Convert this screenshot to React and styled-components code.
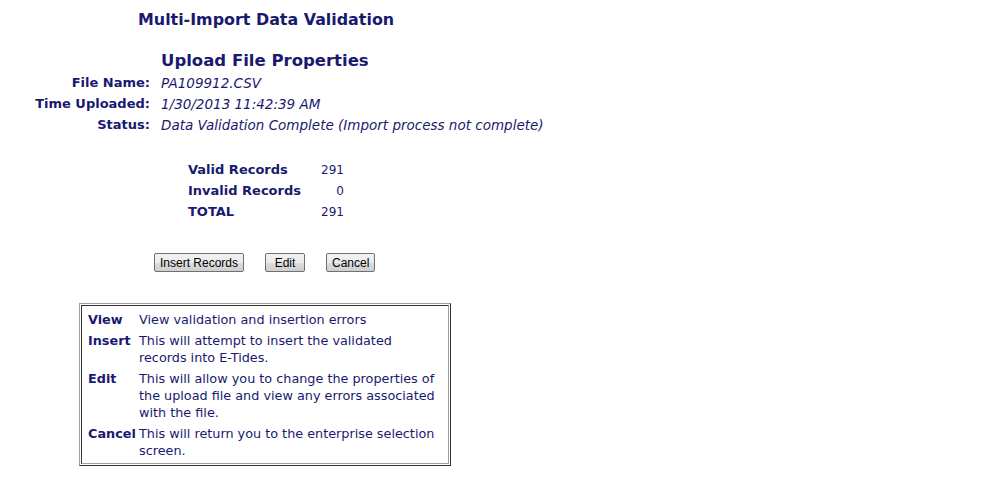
import React from "react";
import styled, { createGlobalStyle } from "styled-components";

const GlobalStyle = createGlobalStyle`
  html, body {
    margin: 0;
    padding: 0;
    background: #ffffff;
  }
  body {
    font-family: "DejaVu Sans", Verdana, sans-serif;
    color: #191970;
  }
`;

const Page = styled.div`
  width: 1000px;
  height: 477px;
  padding-top: 10px;
  box-sizing: border-box;
`;

const Title = styled.h1`
  margin: 0 0 0 138px;
  font-size: 15.9px;
  line-height: 20px;
  font-weight: bold;
  color: #191970;
`;

const SubTitle = styled.h2`
  margin: 20px 0 0 161px;
  font-size: 16.5px;
  line-height: 22px;
  font-weight: bold;
  color: #191970;
`;

const Props = styled.div`
  display: grid;
  grid-template-columns: 150px auto;
  column-gap: 11px;
  grid-auto-rows: 21px;
  align-items: center;
`;

const Label = styled.div`
  text-align: right;
  font-weight: bold;
  font-size: 13px;
`;

const Value = styled.div`
  font-style: italic;
  font-size: 13.5px;
`;

const Counts = styled.div`
  display: grid;
  grid-template-columns: 122px 34px;
  grid-auto-rows: 21px;
  align-items: center;
  margin: 24px 0 0 188px;
  font-size: 13px;
`;

const CountLabel = styled.div`
  font-weight: bold;
`;

const CountValue = styled.div`
  text-align: right;
  font-size: 12px;
`;

const Buttons = styled.div`
  display: flex;
  gap: 21px;
  margin: 31px 0 0 154px;
`;

const Button = styled.button`
  height: 19px;
  padding: 0 5px;
  font-family: "Liberation Sans", Arial, sans-serif;
  font-size: 12px;
  color: #000;
  border: 1px solid #707070;
  border-radius: 2px;
  background: linear-gradient(#f2f2f2, #ebebeb 50%, #dddddd 51%, #cfcfcf);
  min-width: ${({ $min }) => $min || 0}px;
`;

const HelpBox = styled.div`
  margin: 31px 0 0 79px;
  width: 372px;
  box-sizing: border-box;
  border: 1px solid;
  border-color: #a0a0a0 #333333 #333333 #a0a0a0;
  padding: 1px;
`;

const HelpInner = styled.div`
  border: 1px solid;
  border-color: #333333 #a0a0a0 #a0a0a0 #333333;
  padding: 5px 7px 4px 6px;
  display: grid;
  grid-template-columns: 51px auto;
  row-gap: 4px;
  font-size: 12.8px;
  line-height: 17px;
`;

const Term = styled.div`
  font-weight: bold;
`;

const Desc = styled.div``;

const props = [
  ["File Name:", "PA109912.CSV"],
  ["Time Uploaded:", "1/30/2013 11:42:39 AM"],
  ["Status:", "Data Validation Complete (Import process not complete)"],
];

const counts = [
  ["Valid Records", "291"],
  ["Invalid Records", "0"],
  ["TOTAL", "291"],
];

const help = [
  ["View", "View validation and insertion errors"],
  ["Insert", "This will attempt to insert the validated records into E-Tides."],
  [
    "Edit",
    "This will allow you to change the properties of the upload file and view any errors associated with the file.",
  ],
  ["Cancel", "This will return you to the enterprise selection screen."],
];

export default function App() {
  return (
    <Page>
      <GlobalStyle />
      <Title>Multi-Import Data Validation</Title>
      <SubTitle>Upload File Properties</SubTitle>
      <Props>
        {props.map(([l, v]) => (
          <React.Fragment key={l}>
            <Label>{l}</Label>
            <Value>{v}</Value>
          </React.Fragment>
        ))}
      </Props>
      <Counts>
        {counts.map(([l, v]) => (
          <React.Fragment key={l}>
            <CountLabel>{l}</CountLabel>
            <CountValue>{v}</CountValue>
          </React.Fragment>
        ))}
      </Counts>
      <Buttons>
        <Button>Insert Records</Button>
        <Button $min={40}>Edit</Button>
        <Button>Cancel</Button>
      </Buttons>
      <HelpBox>
        <HelpInner>
          {help.map(([t, d]) => (
            <React.Fragment key={t}>
              <Term>{t}</Term>
              <Desc>{d}</Desc>
            </React.Fragment>
          ))}
        </HelpInner>
      </HelpBox>
    </Page>
  );
}
